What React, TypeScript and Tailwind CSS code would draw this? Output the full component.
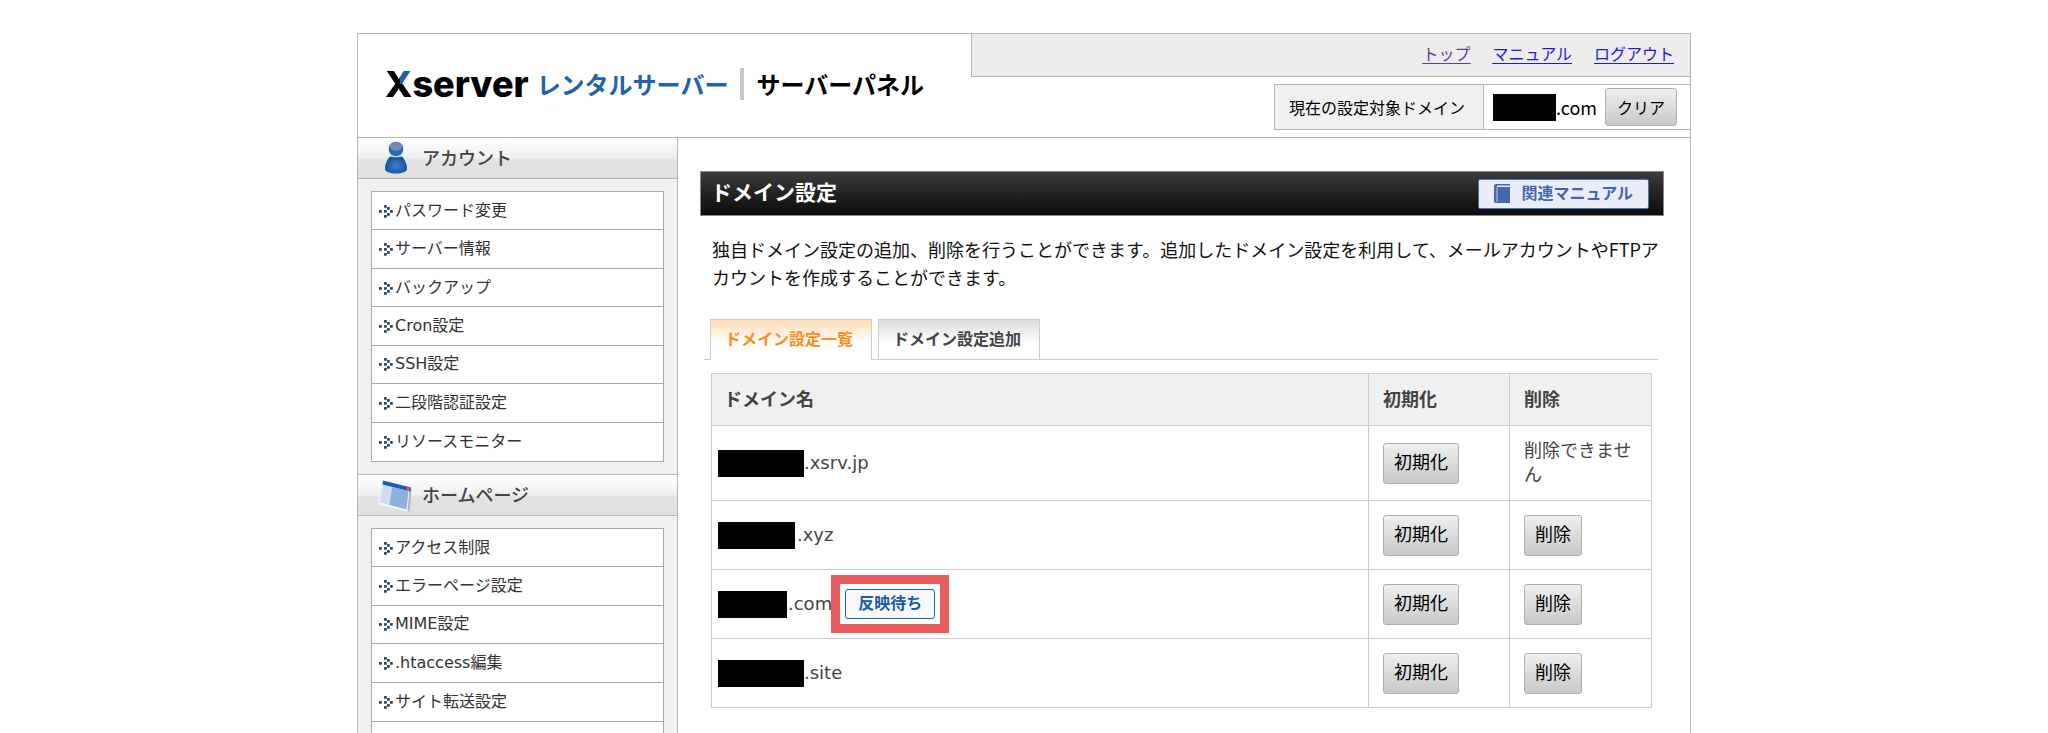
import type { ReactNode } from 'react';

const accountItems = ['パスワード変更', 'サーバー情報', 'バックアップ', 'Cron設定', 'SSH設定', '二段階認証設定', 'リソースモニター'];
const homepageItems = ['アクセス制限', 'エラーページ設定', 'MIME設定', '.htaccess編集', 'サイト転送設定'];

type Domain = { mask: string; suffix: string; removable: boolean; pending?: boolean };

const domains: Domain[] = [
  { mask: 'w-[86px]', suffix: '.xsrv.jp', removable: false },
  { mask: 'w-[77px] mr-[2px]', suffix: '.xyz', removable: true },
  { mask: 'w-[69px] mr-[1px]', suffix: '.com', removable: true, pending: true },
  { mask: 'w-[86px]', suffix: '.site', removable: true },
];

function ArrowDots() {
  const dots = [[0, 6], [5, 1], [5, 6], [5, 11], [8, 3], [8, 9], [11, 6]];
  return (
    <svg width="14" height="14" viewBox="0 0 14 14" className="shrink-0" aria-hidden="true">
      {dots.map(([x, y]) => (
        <rect key={`${x}-${y}`} x={x} y={y} width="2.8" height="2.8" rx="0.6" fill="#2a4560" />
      ))}
    </svg>
  );
}

function UserIcon() {
  return (
    <svg width="24" height="34" viewBox="0 0 24 34" aria-hidden="true">
      <defs>
        <radialGradient id="body" cx="0.5" cy="0.55" r="0.6">
          <stop offset="0" stopColor="#3f82c8" />
          <stop offset="1" stopColor="#0b4a9c" />
        </radialGradient>
      </defs>
      <path d="M6 15.500h12c3 3 5 8 5 12 0 3.500-5 5-11 5s-11-1.500-11-5c0-4 2-9 5-12z" fill="url(#body)" />
      <ellipse cx="12" cy="14.500" rx="6" ry="1.800" fill="#dfe8f2" />
      <circle cx="12" cy="8" r="7.300" fill="#2a6ab6" />
      <ellipse cx="12" cy="5.500" rx="6" ry="4.300" fill="#7389b4" />
    </svg>
  );
}

function WindowIcon() {
  return (
    <svg width="36" height="34" viewBox="0 0 36 34" aria-hidden="true">
      <path d="M5 4l28 6.500-2 23-31-7z" fill="#f7f8fa" />
      <path d="M31.500 10.500l2 0.500-2 22.500-2-0.500z" fill="#b4b6bb" />
      <path d="M4.500 7l9.500 2-2.500 18-10-2.500z" fill="#cfdcf1" />
      <path d="M14 9l16.500 4-2 18.500-17-4.500z" fill="#8db0de" />
      <path d="M5 2.500l28 7-0.500 4-28-7z" fill="#1a5fb4" />
      <rect x="28.500" y="9.500" width="3" height="3" fill="#ee5544" />
    </svg>
  );
}

function BookIcon() {
  return (
    <svg width="16" height="19" viewBox="0 0 16 19" aria-hidden="true">
      <path d="M0 2a2 2 0 0 1 2-2h14v1.500H3v1.500h13v16H2a2 2 0 0 1-2-2z" fill="#4668ab" />
      <path d="M3 3v15" stroke="#b9c8e6" strokeWidth="1" />
    </svg>
  );
}

function SideSection({ title, icon, children }: { title: string; icon: ReactNode; children: ReactNode }) {
  return (
    <>
      <h2 className="flex h-[41px] shrink-0 items-center border-b border-[#b5b5b5] bg-[linear-gradient(#ffffff,#eeeeee_50%,#e2e2e2_55%,#e0e0e0)] pl-5 text-[18px] font-medium text-[#444]">
        <span className="flex w-11 justify-center pr-2">{icon}</span>
        {title}
      </h2>
      {children}
    </>
  );
}

function SideLink({ label }: { label: string }) {
  return (
    <a href="#" className="flex h-full items-center gap-0.5 pl-[7px] text-[16px] text-[#333]">
      <ArrowDots />
      {label}
    </a>
  );
}

function GrayButton({ children, small = false }: { children: ReactNode; small?: boolean }) {
  return (
    <button
      type="button"
      className={`rounded-[3px] border border-[#b0b0b0] bg-linear-to-b from-[#efefef] to-[#c8c8c8] text-black ${small ? 'h-[38px] px-[11px] text-[16px]' : 'h-[41px] px-[10px] text-[18px]'}`}
    >
      {children}
    </button>
  );
}

export default function App() {
  return (
    <div className="h-screen overflow-hidden bg-white pt-[33px] font-['DejaVu_Sans','Noto_Sans_CJK_JP',sans-serif]">
      <div className="mx-auto flex h-full max-w-[1334px] flex-col border border-b-0 border-[#b5b5b5]">
        <header className="flex h-[104px] shrink-0 justify-between border-b border-[#b5b5b5]">
          <h1 className="flex items-center gap-2 pb-1 pl-[27px] font-['Noto_Sans_CJK_JP',sans-serif] text-[24px] font-bold">
            <span className="font-['Inter',sans-serif] text-[36px] leading-[44px] font-extrabold text-black">
              <span className="bg-[conic-gradient(from_0deg_at_54%_49%,#1f63b0_90deg,#000_90deg)] bg-clip-text text-transparent">X</span>server
            </span>
            <span className="text-[#1f63b0]">レンタルサーバー</span>
            <span className="mx-1 h-8 w-1 bg-[#c8c8c8]" />
            <span className="text-black">サーバーパネル</span>
          </h1>
          <div className="flex w-[719px] flex-col items-end gap-[7px] font-['Noto_Sans_CJK_JP',sans-serif]">
            <nav className="flex h-[43px] w-full items-center justify-end gap-[22px] border-b border-l border-[#b5b5b5] bg-[#ededed] pr-4 pb-1 text-[16px] text-[#1a1aee] underline underline-offset-3">
              <a href="#" className="text-[#6a3a9a]">トップ</a>
              <a href="#">マニュアル</a>
              <a href="#">ログアウト</a>
            </nav>
            <div className="flex h-[46px] border border-r-0 border-[#b5b5b5]">
              <span className="flex w-[209px] items-center border-r border-[#b5b5b5] bg-[#f0f0f0] pl-[14px] text-[16px]">現在の設定対象ドメイン</span>
              <span className="flex items-center pr-[13px] pl-[9px] text-[18px]">
                <span className="h-[27px] w-[63px] bg-black" />
                <span className="mr-2">.com</span>
                <GrayButton small>クリア</GrayButton>
              </span>
            </div>
          </div>
        </header>

        <div className="flex min-h-0 flex-1">
          <aside className="flex w-[320px] shrink-0 flex-col border-r border-[#b5b5b5] bg-[#f0f0f0]">
            <SideSection title="アカウント" icon={<UserIcon />}>
              <ul className="mx-[13px] my-3 grid h-[271px] shrink-0 auto-rows-fr divide-y divide-[#aaa] border border-[#aaa] bg-white">
                {accountItems.map((label) => <li key={label}><SideLink label={label} /></li>)}
              </ul>
            </SideSection>
            <div className="border-t border-[#b5b5b5]" />
            <SideSection title="ホームページ" icon={<WindowIcon />}>
              <div className="mx-[13px] mt-3 flex-1 border border-b-0 border-[#aaa] bg-white">
                <ul className="grid h-[193px] auto-rows-fr divide-y divide-[#aaa] border-b border-[#aaa]">
                  {homepageItems.map((label) => <li key={label}><SideLink label={label} /></li>)}
                </ul>
              </div>
            </SideSection>
          </aside>

          <main className="min-w-0 flex-1 pt-[33px] pr-[26px] pl-[22px]">
            <div className="flex h-[45px] items-center justify-between border border-[#888] bg-linear-to-b from-[#3c3c3c] to-[#0c0c0c] pr-[14px] pl-[10px]">
              <h2 className="text-[21px] font-bold text-white">ドメイン設定</h2>
              <a href="#" className="flex h-[30px] items-center gap-[11px] rounded-[2px] border border-[#4a72b8] bg-[#e8edf8] px-[15px] text-[16px] font-bold text-[#4668ab]">
                <BookIcon />
                関連マニュアル
              </a>
            </div>
            <p className="mt-[19px] pl-3 font-['Noto_Sans_CJK_JP',sans-serif] text-[18px] leading-[28px] text-[#111]">
              独自ドメイン設定の追加、削除を行うことができます。追加したドメイン設定を利用して、メールアカウントやFTPアカウントを作成することができます。
            </p>
            <div className="mt-[28px] mr-[6px] ml-1 flex gap-[6px] border-b border-[#ccc] pl-[6px] text-[16px] font-bold">
              <button type="button" className="-mb-px h-[41px] border border-b-0 border-[#ccc] bg-linear-to-b from-[#ffdcb4] to-white to-60% pr-[18px] pl-[14px] text-[#ff8c1a]">ドメイン設定一覧</button>
              <button type="button" className="h-[40px] border border-b-0 border-[#ccc] bg-linear-to-b from-[#dcdcdc] to-white to-60% pr-[18px] pl-[14px] text-[#444]">ドメイン設定追加</button>
            </div>
            <div className="mt-[13px] mr-3 ml-[11px]">
              <table className="w-full table-fixed border-collapse text-left text-[18px] leading-[24px] text-[#444] [&_td]:border [&_td]:border-[#ccc] [&_th]:border [&_th]:border-[#ccc]">
                <thead className="bg-[#f0f0f0]">
                  <tr className="h-[52px]">
                    <th className="px-3">ドメイン名</th>
                    <th className="w-[141px] px-[14px]">初期化</th>
                    <th className="w-[142px] px-[14px]">削除</th>
                  </tr>
                </thead>
                <tbody>
                  {domains.map((d) => (
                    <tr key={d.suffix} className={d.removable ? 'h-[69px]' : 'h-[75px]'}>
                      <td className="pl-[6px]">
                        <div className="flex items-center">
                          <span className={`h-[27px] bg-black ${d.mask}`} />
                          <span>{d.suffix}</span>
                          {d.pending && (
                            <span className="relative ml-[13px] flex h-[30px] items-center rounded-[3px] border border-[#1f63b0] bg-[#f5f8fc] px-3 text-[16px] font-bold text-[#1a5ba6]">
                              反映待ち
                              <span className="absolute -inset-[15px] border-[9px] border-[#e85d5d]" />
                            </span>
                          )}
                        </div>
                      </td>
                      <td className="px-[14px]"><GrayButton>初期化</GrayButton></td>
                      <td className="px-[14px]">{d.removable ? <GrayButton>削除</GrayButton> : '削除できません'}</td>
                    </tr>
                  ))}
                </tbody>
              </table>
            </div>
          </main>
        </div>
      </div>
    </div>
  );
}
